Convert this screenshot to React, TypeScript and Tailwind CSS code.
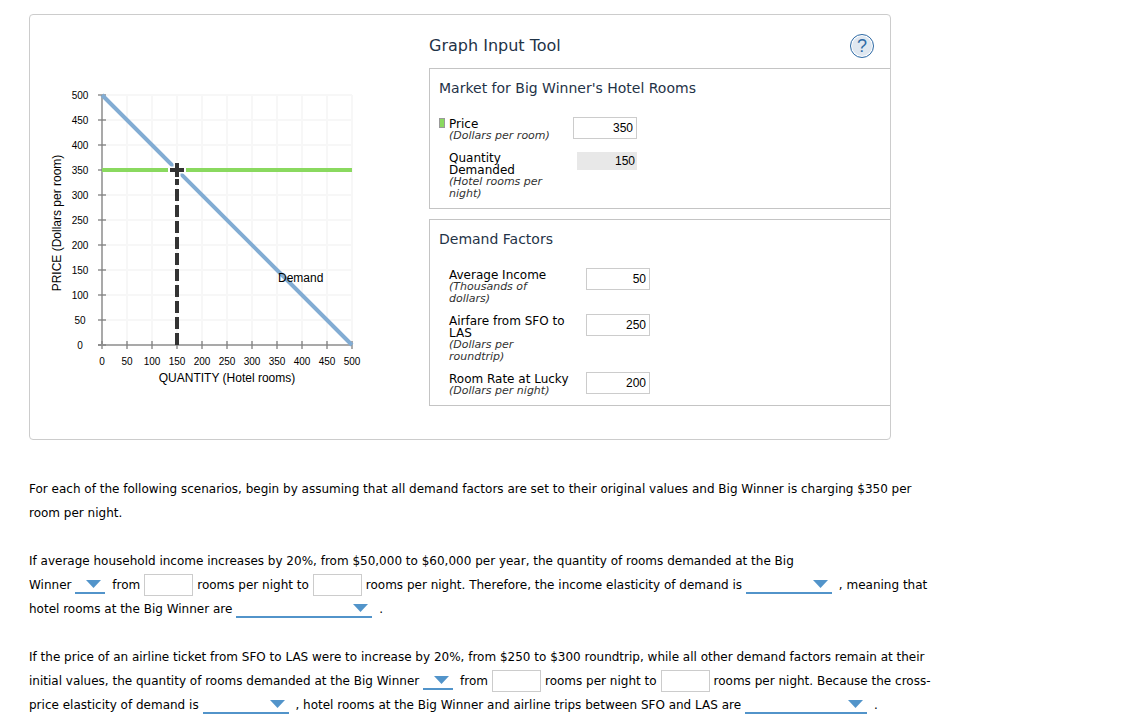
import type { ReactNode } from "react";

const TICKS = [0, 50, 100, 150, 200, 250, 300, 350, 400, 450, 500];

// The plot is 250 x 250 px with its origin at (72, 270): one pixel stands for two units.
const px = (q: number) => 72 + q / 2;
const py = (p: number) => 270 - p / 2;

function DemandChart() {
  return (
    <svg
      width="360"
      height="320"
      viewBox="0 0 360 320"
      role="img"
      aria-label="Demand graph"
      className="mt-[60px] block shrink-0 font-['Liberation_Sans',sans-serif]"
    >
      {TICKS.map((t) => (
        <path key={t} d={`M${px(t)} 20V270M72 ${py(t)}H322`} stroke="#f7f7f7" strokeWidth="2" />
      ))}
      <path d="M72 20V271M68 270H322" stroke="#a9a9a9" strokeWidth="2" />
      {TICKS.map((t) => (
        <path key={t} d={`M68 ${py(t)}H76M${px(t)} 266V274`} stroke="#808080" strokeOpacity="0.65" strokeWidth="2" />
      ))}
      {TICKS.map((t) => (
        <g key={t} fontSize="10" fill="#000" textAnchor="middle">
          <text x="50" y={py(t) + 4}>{t}</text>
          <text x={px(t)} y="290">{t}</text>
        </g>
      ))}
      <path d="M72 20L322 270" stroke="#82acd3" strokeWidth="4" />
      <path d="M72 95H322" stroke="#8ad95f" strokeWidth="4" />
      <path d="M138 95H156M147 86V104" stroke="#fff" strokeWidth="7" />
      <path d="M147 270V104" stroke="#333" strokeWidth="4" strokeDasharray="12 4" />
      <path d="M140 95H154M147 88V102" stroke="#333" strokeWidth="4" />
      <text x="248" y="207" fontSize="12">Demand</text>
      <text x="197" y="307" fontSize="12" textAnchor="middle">QUANTITY (Hotel rooms)</text>
      <text transform="translate(31 148) rotate(-90)" fontSize="12" textAnchor="middle">
        PRICE (Dollars per room)
      </text>
    </svg>
  );
}

type FieldProps = {
  id: string;
  label: string[];
  unit: string[];
  value: string;
  swatch?: boolean;
  readOnly?: boolean;
  labelWidth: "narrow" | "wide";
};

function Field({ id, label, unit, value, swatch, readOnly, labelWidth }: FieldProps) {
  return (
    <div className="flex items-start">
      <div className="w-[10px] shrink-0">
        {swatch && <div className="h-[10px] w-[6px] border border-[#999] bg-[#8ad95f]" />}
      </div>
      <label
        htmlFor={id}
        className={`block shrink-0 leading-[12px] ${labelWidth === "narrow" ? "w-[124px]" : "w-[137px]"}`}
      >
        {label.map((l) => (
          <span key={l} className="block whitespace-nowrap text-[12px] text-black">{l}</span>
        ))}
        {unit.map((u) => (
          <span key={u} className="block whitespace-nowrap text-[11px] text-[#333] italic">{u}</span>
        ))}
      </label>
      {readOnly ? (
        <output
          id={id}
          className="ml-1 block h-[18px] w-[60px] bg-[#e8e8e8] pr-[2px] text-right font-['Liberation_Sans',sans-serif] text-[12px] leading-[18px] text-black"
        >
          {value}
        </output>
      ) : (
        <input
          id={id}
          defaultValue={value}
          className="-mt-px h-[22px] w-16 border border-[#ccc] bg-white pr-[3px] text-right font-['Liberation_Sans',sans-serif] text-[12px] text-black"
        />
      )}
    </div>
  );
}

function Section({ title, children }: { title: string; children: ReactNode }) {
  return (
    <section className="border border-r-0 border-[#c4c4c4] px-[9px] pt-2 pb-2">
      <h2 className="text-[14px] leading-[22px] text-[#1f3347]">{title}</h2>
      <div className="mt-[19px] flex flex-col gap-[10px]">{children}</div>
    </section>
  );
}

function Blank({ label }: { label: string }) {
  return (
    <input
      aria-label={label}
      className="mx-1 mb-[2px] inline-block h-[22px] w-[49px] border border-[#ccc] bg-white px-1 align-middle"
    />
  );
}

function Choice({ label, options, size }: { label: string; options: string[]; size: "sm" | "md" | "lg" | "xl" }) {
  const width = { sm: "w-[30px]", md: "w-[86px]", lg: "w-[122px]", xl: "w-[136px]" }[size];
  return (
    <span className={`relative mr-[3px] mb-[2px] ml-1 inline-block h-[18px] align-middle ${width}`}>
      <select
        aria-label={label}
        defaultValue=""
        className="block h-full w-full appearance-none border-b-2 border-[#5294ca] bg-transparent"
      >
        <option value="" />
        {options.map((o) => (
          <option key={o}>{o}</option>
        ))}
      </select>
      <svg
        width="15"
        height="8"
        viewBox="0 0 15 8"
        className="pointer-events-none absolute top-[4px] right-[4px]"
        aria-hidden="true"
      >
        <path d="M0 0H15L7.5 8Z" fill="#5294ca" />
      </svg>
    </span>
  );
}

function Line({ children }: { children: ReactNode }) {
  return <span className="block h-6 whitespace-nowrap">{children}</span>;
}

export default function App() {
  return (
    <main className="bg-white pt-[14px] pl-[29px] font-['DejaVu_Sans',sans-serif] text-black">
      <div className="flex max-w-[862px] rounded-[4px] border border-[#ccc] pb-[33px]">
        <div className="w-[399px] shrink-0">
          <DemandChart />
        </div>
        <div className="min-w-0 flex-1">
          <header className="flex h-[53px] items-center justify-between pt-[9px] pr-4">
            <h1 className="text-[16px] text-[#1f3347]">Graph Input Tool</h1>
            <button
              type="button"
              aria-label="Help"
              className="flex size-6 items-center justify-center rounded-full border border-[#2f6ba6] bg-[#dfe7f0] font-['Liberation_Sans',sans-serif] text-[18px] leading-none font-medium text-[#2f6ba6] ring-1 ring-white ring-inset"
            >
              ?
            </button>
          </header>
          <div className="flex flex-col gap-[10px]">
            <Section title="Market for Big Winner's Hotel Rooms">
              <Field id="price" swatch labelWidth="narrow" label={["Price"]} unit={["(Dollars per room)"]} value="350" />
              <Field
                id="quantity"
                readOnly
                labelWidth="narrow"
                label={["Quantity", "Demanded"]}
                unit={["(Hotel rooms per", "night)"]}
                value="150"
              />
            </Section>
            <Section title="Demand Factors">
              <Field id="income" labelWidth="wide" label={["Average Income"]} unit={["(Thousands of", "dollars)"]} value="50" />
              <Field
                id="airfare"
                labelWidth="wide"
                label={["Airfare from SFO to", "LAS"]}
                unit={["(Dollars per", "roundtrip)"]}
                value="250"
              />
              <Field id="rate" labelWidth="wide" label={["Room Rate at Lucky"]} unit={["(Dollars per night)"]} value="200" />
            </Section>
          </div>
        </div>
      </div>

      <div className="mt-[37px] flex flex-col gap-6 text-[12px] leading-6">
        <p>
          <Line>
            For each of the following scenarios, begin by assuming that all demand factors are set to their original
            values and Big Winner is charging $350 per
          </Line>
          <Line>room per night.</Line>
        </p>
        <p>
          <Line>
            If average household income increases by 20%, from $50,000 to $60,000 per year, the quantity of rooms
            demanded at the Big
          </Line>
          <Line>
            Winner
            <Choice label="Direction of change" options={["rises", "falls"]} size="sm" /> from
            <Blank label="Initial rooms" />
            rooms per night to
            <Blank label="New rooms" />
            rooms per night. Therefore, the income elasticity of demand is
            <Choice label="Income elasticity" options={["0.5", "1", "2"]} size="md" /> , meaning that
          </Line>
          <Line>
            hotel rooms at the Big Winner are
            <Choice label="Type of good" options={["a normal good", "an inferior good"]} size="xl" /> .
          </Line>
        </p>
        <p>
          <Line>
            If the price of an airline ticket from SFO to LAS were to increase by 20%, from $250 to $300 roundtrip,
            while all other demand factors remain at their
          </Line>
          <Line>
            initial values, the quantity of rooms demanded at the Big Winner
            <Choice label="Direction of change" options={["rises", "falls"]} size="sm" /> from
            <Blank label="Initial rooms" />
            rooms per night to
            <Blank label="New rooms" />
            rooms per night. Because the cross-
          </Line>
          <Line>
            price elasticity of demand is
            <Choice label="Cross-price elasticity" options={["-0.5", "-1", "1"]} size="md" /> , hotel rooms at the Big
            Winner and airline trips between SFO and LAS are
            <Choice label="Relationship" options={["complements", "substitutes"]} size="lg" /> .
          </Line>
        </p>
      </div>
    </main>
  );
}
